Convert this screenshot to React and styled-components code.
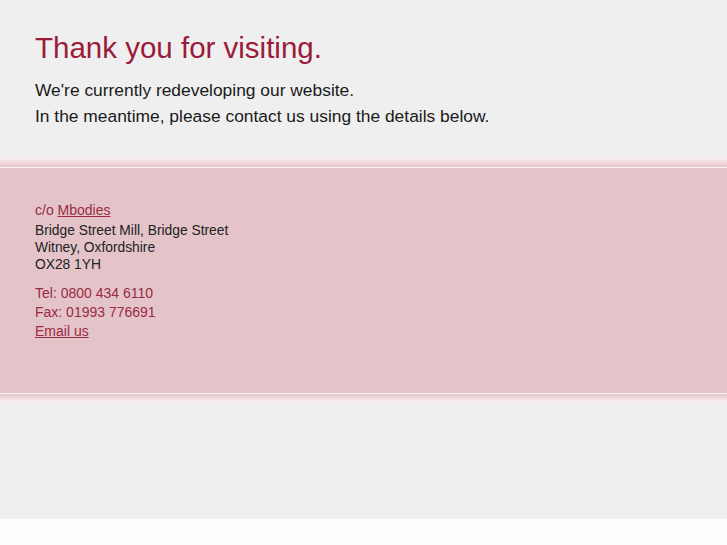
import styled, { createGlobalStyle } from 'styled-components'

const GlobalStyle = createGlobalStyle`
  html, body {
    margin: 0;
    padding: 0;
    background: #fefefe;
    font-family: "Liberation Sans", Arial, sans-serif;
  }
`

const Page = styled.div`
  background: #efefef;
  height: 519px;
`

const Intro = styled.div`
  padding: 30px 35px 0;
  height: 128px;
`

const Title = styled.h1`
  margin: 0 0 11px;
  font-size: 29.5px;
  font-weight: normal;
  line-height: 36px;
  color: #9b1b3a;
`

const Lead = styled.p`
  margin: 0;
  font-size: 17.4px;
  line-height: 26px;
  color: #1a1a1a;
`

const Band = styled.div`
  height: ${p => (p.$flip ? '8px' : '9px')};
  background: linear-gradient(${p => (p.$flip ? '180deg' : '0deg')}, #e6c6cb 0%, #f8eef0 100%);
  border-${p => (p.$flip ? 'top' : 'bottom')}: 1px solid #fbf4f5;
`

const Contact = styled.div`
  background: #e4c4c9;
  padding: 33px 35px 40px;
  height: 225px;
  box-sizing: border-box;
`

const Care = styled.div`
  font-size: 14px;
  line-height: 18px;
  color: #9b2a45;
  margin-bottom: 3px;
`

const Address = styled.div`
  font-size: 13.8px;
  line-height: 17px;
  color: #222;
  margin-bottom: 11px;
`

const Line = styled.div`
  font-size: 14px;
  line-height: 19px;
  color: #9b2a45;
`

const Link = styled.a`
  color: #9b2a45;
  text-decoration: underline;
`

export default function App() {
  return (
    <>
      <GlobalStyle />
      <Page>
        <Intro>
          <Title>Thank you for visiting.</Title>
          <Lead>We're currently redeveloping our website.</Lead>
          <Lead>In the meantime, please contact us using the details below.</Lead>
        </Intro>
        <Band />
        <Contact>
          <Care>
            c/o <Link href="#">Mbodies</Link>
          </Care>
          <Address>
            Bridge Street Mill, Bridge Street
            <br />
            Witney, Oxfordshire
            <br />
            OX28 1YH
          </Address>
          <Line>Tel: 0800 434 6110</Line>
          <Line>Fax: 01993 776691</Line>
          <Line>
            <Link href="#">Email us</Link>
          </Line>
        </Contact>
        <Band $flip />
      </Page>
    </>
  )
}
